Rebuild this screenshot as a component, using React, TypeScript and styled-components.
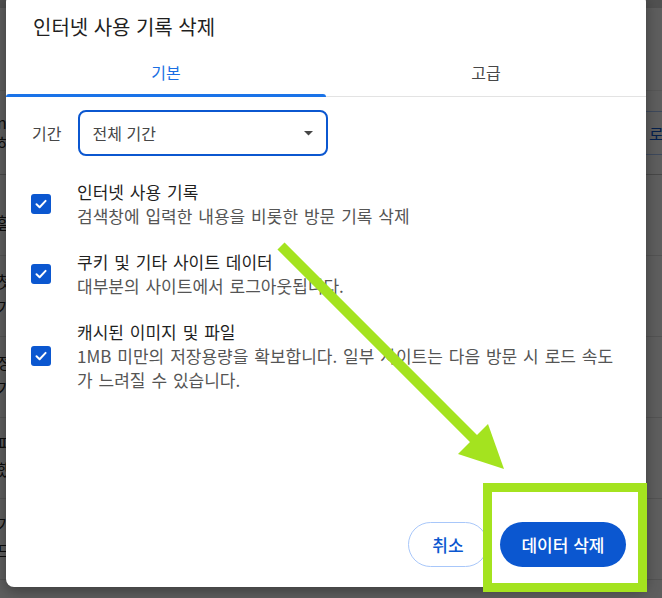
import React from "react";
import styled, { createGlobalStyle } from "styled-components";

const GlobalStyle = createGlobalStyle`
  html, body {
    margin: 0;
    padding: 0;
  }
  body {
    font-family: "Noto Sans CJK KR", "Noto Sans", sans-serif;
  }
  * {
    box-sizing: border-box;
  }
`;

const Screen = styled.div`
  position: relative;
  width: 662px;
  height: 598px;
  overflow: hidden;
  background: #ffffff;
`;

/* settings page that sits under the scrim */
const Page = styled.div`
  width: 720px;
  display: flex;
  flex-direction: column;
  color: #1f1f1f;
  font-size: 16px;
`;

const TopBar = styled.div`
  height: 8px;
  background: #dcdcdc;
`;

const PageHeader = styled.div`
  height: 83px;
  border-bottom: 1px solid #ececec;
`;

const PageIntro = styled.div`
  height: 84px;
  display: grid;
  grid-template-columns: 610px auto;
  align-items: center;
  border-bottom: 1px solid #c4c4c4;
`;

const IntroText = styled.div`
  line-height: 21px;
  margin-left: -3px;
`;

const SignInButton = styled.div`
  height: 44px;
  padding: 0 0 0 38px;
  display: flex;
  align-items: center;
  border: 1px solid #a8c7fa;
  border-radius: 22px;
  color: #0b57d0;
  width: 110px;
`;

const PageRow = styled.div<{ $top?: number }>`
  height: 81px;
  padding-top: ${p => p.$top ?? 12}px;
  margin-left: -3px;
  line-height: 26px;
  border-bottom: 1px solid #e2e2e2;
`;

const Scrim = styled.div`
  position: absolute;
  inset: 0;
  background: rgba(0, 0, 0, 0.63);
`;

/* dialog */
const Dialog = styled.div`
  position: absolute;
  left: 6px;
  top: -6px;
  width: 640px;
  height: 593px;
  background: #ffffff;
  border-radius: 8px;
  box-shadow: 0 4px 14px rgba(0, 0, 0, 0.35);
  display: flex;
  flex-direction: column;
`;

const Title = styled.h1`
  margin: 0;
  padding: 20px 27px 7px;
  font-size: 20px;
  line-height: 26px;
  font-weight: 400;
  word-spacing: 1px;
  color: #1f1f1f;
`;

const Tabs = styled.div`
  display: grid;
  grid-template-columns: 1fr 1fr;
  border-bottom: 1px solid #e3e3e3;
`;

const Tab = styled.div<{ $active?: boolean }>`
  position: relative;
  height: 49px;
  display: flex;
  align-items: center;
  justify-content: center;
  font-size: 16px;
  color: ${p => (p.$active ? "#1a6fe3" : "#474747")};

  &::after {
    content: "";
    display: ${p => (p.$active ? "block" : "none")};
    position: absolute;
    left: 0;
    right: 0;
    bottom: -1px;
    height: 3px;
    border-radius: 3px 3px 0 0;
    background: #1a73e8;
  }
`;

const Body = styled.div`
  padding: 13px 29px 0 25px;
  display: flex;
  flex-direction: column;
`;

const RangeRow = styled.div`
  display: flex;
  align-items: center;
  gap: 17px;
  padding-left: 1px;
`;

const RangeLabel = styled.span`
  font-size: 16px;
  color: #474747;
`;

const Select = styled.div`
  width: 250px;
  height: 46px;
  border: 2px solid #0b57d0;
  border-radius: 8px;
  display: flex;
  align-items: center;
  justify-content: space-between;
  padding: 0 13px 0 12px;
  font-size: 16px;
  word-spacing: 1px;
  color: #474747;
`;

const Options = styled.div`
  margin-top: 24px;
  display: flex;
  flex-direction: column;
  gap: 22px;
`;

const Option = styled.div`
  display: grid;
  grid-template-columns: 20px 1fr;
  column-gap: 26px;
  align-items: center;
`;

const Checkbox = styled.div`
  width: 20px;
  height: 20px;
  border-radius: 3px;
  background: #0b57d0;
  display: flex;
  align-items: center;
  justify-content: center;
`;

const OptionText = styled.div`
  font-size: 17px;
  line-height: 24px;
  word-spacing: 2.1px;
`;

const OptionTitle = styled.div`
  color: #1f1f1f;
`;

const OptionDesc = styled.div`
  color: #555555;
`;

const Footer = styled.div`
  margin-top: auto;
  padding: 0 20px 20px;
  display: flex;
  justify-content: flex-end;
  gap: 12px;
`;

const Button = styled.button<{ $primary?: boolean }>`
  height: 45px;
  width: ${p => (p.$primary ? 126 : 80)}px;
  border-radius: 23px;
  font-family: inherit;
  font-size: 17px;
  font-weight: 500;
  word-spacing: 1px;
  border: ${p => (p.$primary ? "none" : "1px solid #a8c7fa")};
  background: ${p => (p.$primary ? "#0b57d0" : "#ffffff")};
  color: ${p => (p.$primary ? "#ffffff" : "#0b57d0")};
`;

/* annotations drawn over the screenshot */
const Annotation = styled.svg`
  position: absolute;
  left: 0;
  top: 0;
  pointer-events: none;
`;

const Highlight = styled.div`
  position: absolute;
  left: 483px;
  top: 483px;
  width: 164px;
  height: 109px;
  border: 9px solid #a4e31f;
`;

const CheckMark = () => (
  <svg width="14" height="14" viewBox="0 0 14 14">
    <polyline
      points="2.5,7.3 5.6,10.2 11.6,3.9"
      fill="none"
      stroke="#ffffff"
      strokeWidth="2"
      strokeLinecap="round"
      strokeLinejoin="round"
    />
  </svg>
);

const Caret = () => (
  <svg width="9" height="5" viewBox="0 0 9 5">
    <polygon points="0,0 9,0 4.5,4.5" fill="#474747" />
  </svg>
);

const options = [
  {
    title: "인터넷 사용 기록",
    desc: "검색창에 입력한 내용을 비롯한 방문 기록 삭제",
  },
  {
    title: "쿠키 및 기타 사이트 데이터",
    desc: "대부분의 사이트에서 로그아웃됩니다.",
  },
  {
    title: "캐시된 이미지 및 파일",
    desc: "1MB 미만의 저장용량을 확보합니다. 일부 사이트는 다음 방문 시 로드 속도가 느려질 수 있습니다.",
  },
];

const pageRows = [
  ["첫 화면", "가져오기"],
  ["정보", "기본값"],
  ["피드", "했던 탭"],
  ["가족", "드라이브"],
];

export default function App() {
  return (
    <>
      <GlobalStyle />
      <Screen>
        <Page>
          <TopBar />
          <PageHeader />
          <PageIntro>
            <IntroText>
              <div>nt 설정</div>
              <div>하기</div>
            </IntroText>
            <SignInButton>로그인</SignInButton>
          </PageIntro>
          <PageRow $top={34}>할 일</PageRow>
          {pageRows.map(([a, b]) => (
            <PageRow key={a}>
              <div>{a}</div>
              <div>{b}</div>
            </PageRow>
          ))}
        </Page>
        <Scrim />

        <Dialog>
          <Title>인터넷 사용 기록 삭제</Title>
          <Tabs>
            <Tab $active>기본</Tab>
            <Tab>고급</Tab>
          </Tabs>
          <Body>
            <RangeRow>
              <RangeLabel>기간</RangeLabel>
              <Select>
                <span>전체 기간</span>
                <Caret />
              </Select>
            </RangeRow>
            <Options>
              {options.map(o => (
                <Option key={o.title}>
                  <Checkbox>
                    <CheckMark />
                  </Checkbox>
                  <OptionText>
                    <OptionTitle>{o.title}</OptionTitle>
                    <OptionDesc>{o.desc}</OptionDesc>
                  </OptionText>
                </Option>
              ))}
            </Options>
          </Body>
          <Footer>
            <Button>취소</Button>
            <Button $primary>데이터 삭제</Button>
          </Footer>
        </Dialog>

        <Annotation width="662" height="598" viewBox="0 0 662 598">
          <line x1="281" y1="246" x2="476" y2="441" stroke="#a4e31f" strokeWidth="10" />
          <polygon points="504,469 458,454 488,424" fill="#a4e31f" />
        </Annotation>
        <Highlight />
      </Screen>
    </>
  );
}
